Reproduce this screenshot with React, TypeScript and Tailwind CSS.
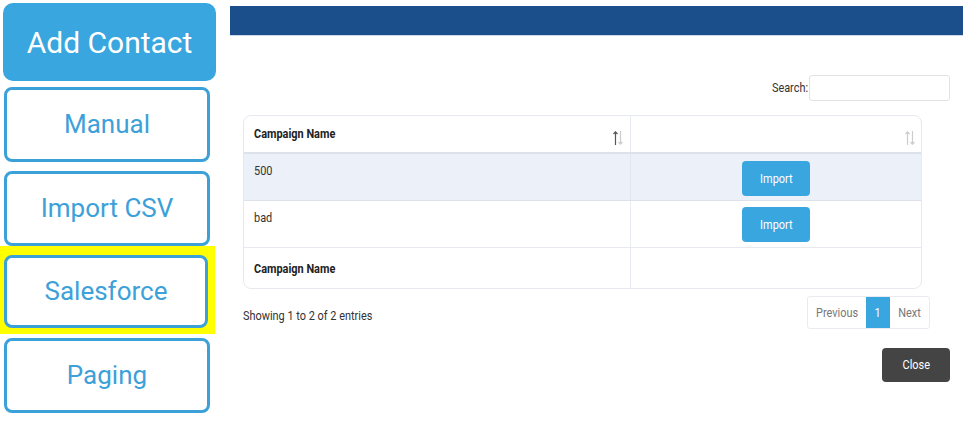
import React from "react";

function C({ children, origin = "left", className = "" }: { children: React.ReactNode; origin?: "left" | "center" | "right"; className?: string }) {
  const o = origin === "left" ? "origin-left" : origin === "right" ? "origin-right" : "origin-center";
  return <span className={`inline-block whitespace-nowrap scale-x-[0.84] ${o} ${className}`}>{children}</span>;
}

function SortIcon({ active }: { active?: boolean }) {
  return (
    <svg width="12" height="16" viewBox="0 0 12 16" className="shrink-0">
      <g strokeWidth="1.2" fill="none">
        <path d="M3.5 15V2M1.5 4L3.5 1.8L5.5 4" stroke={active ? "#555" : "#ccc"} />
        <path d="M8.5 1V14M6.5 12L8.5 14.2L10.5 12" stroke="#ccc" />
      </g>
    </svg>
  );
}

function SideBox({ label }: { label: string }) {
  return (
    <div className="w-[206px] h-[75px] border-[3px] border-[#3da1d9] rounded-[8px] bg-white flex items-center justify-center text-[26px] text-[#3da1d9]">
      {label}
    </div>
  );
}

export default function App() {
  return (
    <div className="w-[971px] h-[424px] bg-white flex" style={{ fontFamily: "Roboto, 'Liberation Sans', sans-serif" }}>
      {/* Left column */}
      <div className="w-[230px] shrink-0 flex flex-col">
        <div className="mt-[3px] ml-[3px] w-[213px] h-[78px] rounded-[10px] bg-[#39a6df] flex items-center justify-center text-white text-[30px]">
          Add Contact
        </div>
        <div className="mt-[6px] ml-[4px]">
          <SideBox label="Manual" />
        </div>
        <div className="mt-[9px] ml-[4px]">
          <SideBox label="Import CSV" />
        </div>
        <div className="w-[215px] h-[88px] bg-[#ffff00] pt-[9px] pl-[4px]">
          <div className="w-[204px] h-[73px] border-[3px] border-[#3da1d9] rounded-[8px] bg-white flex items-center justify-center text-[26px] text-[#3da1d9]">
            Salesforce
          </div>
        </div>
        <div className="mt-[4px] ml-[4px]">
          <SideBox label="Paging" />
        </div>
      </div>

      {/* Right panel */}
      <div className="w-[733px] shrink-0 flex flex-col text-[#333] text-[13px]">
        <div className="mt-[6px] h-[30px] bg-[#1a4f8b] border-b border-[#c9d9ea]" />
        <div className="mt-[39px] flex justify-end items-center pr-[13px]">
          <C origin="right" className="mr-[1px]">Search:</C>
          <div className="w-[141px] h-[26px] border border-[#e2e2e2] rounded-[3px] bg-white" />
        </div>
        <div className="mt-[14px] ml-[13px] w-[679px] border border-[#e6e9ef] rounded-[8px] overflow-hidden">
          <div className="flex h-[38px] border-b-2 border-[#dde2ea]">
            <div className="w-[387px] border-r border-[#e8ebf0] flex items-center justify-between pl-[10px] pr-[6px]">
              <C className="font-bold text-[#222]">Campaign Name</C>
              <span className="mt-[8px]"><SortIcon active /></span>
            </div>
            <div className="flex-1 flex items-center justify-end pr-[5px]">
              <span className="mt-[8px]"><SortIcon /></span>
            </div>
          </div>
          <div className="flex h-[47px] bg-[#ecf0f8] border-b border-[#dde2ea]">
            <div className="w-[387px] border-r border-[#e3e7ee] pl-[10px] pt-[7px]"><C>500</C></div>
            <div className="flex-1 flex justify-center pt-[7px]">
              <div className="w-[68px] h-[35px] rounded-[4px] bg-[#39a6df] text-white flex items-center justify-center"><C origin="center">Import</C></div>
            </div>
          </div>
          <div className="flex h-[47px] border-b border-[#e6e9ef]">
            <div className="w-[387px] border-r border-[#e8ebf0] pl-[10px] pt-[7px]"><C>bad</C></div>
            <div className="flex-1 flex justify-center pt-[6px]">
              <div className="w-[68px] h-[35px] rounded-[4px] bg-[#39a6df] text-white flex items-center justify-center"><C origin="center">Import</C></div>
            </div>
          </div>
          <div className="flex h-[40px]">
            <div className="w-[387px] border-r border-[#e8ebf0] pl-[10px] flex items-center">
              <C className="font-bold text-[#222] mt-[1px]">Campaign Name</C>
            </div>
            <div className="flex-1" />
          </div>
        </div>
        <div className="mt-[7px] ml-[13px] w-[687px] flex items-center justify-between">
          <C className="mt-[6px] text-[#333]">Showing 1 to 2 of 2 entries</C>
          <div className="flex h-[33px] border border-[#e8ebef] rounded-[3px]">
            <div className="w-[58px] flex items-center justify-center text-[#777]"><C origin="center">Previous</C></div>
            <div className="w-[24px] flex items-center justify-center bg-[#39a6df] text-white"><C origin="center">1</C></div>
            <div className="w-[39px] flex items-center justify-center text-[#777]"><C origin="center">Next</C></div>
          </div>
        </div>
        <div className="mt-[19px] flex justify-end pr-[13px]">
          <div className="w-[68px] h-[34px] rounded-[4px] bg-[#444444] text-white flex items-center justify-center"><C origin="center">Close</C></div>
        </div>
      </div>
    </div>
  );
}
